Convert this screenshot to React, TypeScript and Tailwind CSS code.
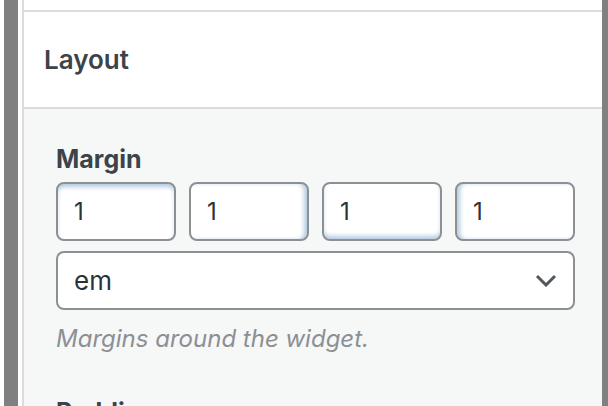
import React from "react";

const font = { fontFamily: "Inter, 'Noto Sans', sans-serif" };

export default function App() {
  const shadows = [
    "shadow-[inset_0_4px_4px_-1px_rgba(120,160,200,0.55)]",
    "shadow-[inset_-4px_0_4px_-1px_rgba(120,160,200,0.55)]",
    "shadow-[inset_0_-4px_4px_-1px_rgba(120,160,200,0.55)]",
    "shadow-[inset_4px_0_4px_-1px_rgba(120,160,200,0.55)]",
  ];
  return (
    <div className="w-[608px] h-[406px] overflow-hidden bg-white flex" style={font}>
      <div className="w-[4px] shrink-0 bg-white" />
      <div className="w-[14px] shrink-0 bg-[#808080]" />
      <div className="w-[4px] shrink-0 bg-white" />
      <div className="w-[2px] shrink-0 bg-[#dcdcde]" />
      <div className="flex-1 min-w-0 flex flex-col overflow-hidden">
        <div className="h-[10px] shrink-0 bg-white" />
        <div className="h-[2px] shrink-0 bg-[#dcdcde]" />
        <div className="h-[95px] shrink-0 bg-white flex items-center pl-[20px]">
          <span className="text-[26px] leading-[32px] font-semibold text-[#3c434a]">Layout</span>
        </div>
        <div className="h-[2px] shrink-0 bg-[#dcdcde]" />
        <div className="flex-1 shrink-0 bg-[#f6f7f7] pl-[32px] pr-[27px] pt-[34px]">
          <div className="text-[25px] leading-[32px] font-bold text-[#3c434a] mb-[7px]">Margin</div>
          <div className="flex gap-[13px]">
            {shadows.map((s, i) => (
              <div
                key={i}
                className={`flex-1 h-[59px] rounded-[8px] border-2 border-[#8c8f94] bg-white flex items-center pl-[16px] text-[24px] text-[#2c3338] ${s}`}
              >
                1
              </div>
            ))}
          </div>
          <div className="mt-[10px] h-[59px] rounded-[8px] border-2 border-[#8c8f94] bg-white flex items-center justify-between pl-[16px] pr-[16px] text-[26px] text-[#2c3338]">
            <span>em</span>
            <svg width="22" height="13" viewBox="0 0 22 13" fill="none">
              <polyline points="2,2 11,11 20,2" stroke="#50575e" strokeWidth="3" />
            </svg>
          </div>
          <div className="mt-[13px] text-[24px] leading-[32px] italic text-[#8c8f94]">Margins around the widget.</div>
          <div className="mt-[41px] text-[25px] leading-[32px] font-bold text-[#3c434a]">Padding</div>
        </div>
      </div>
      <div className="w-[6px] shrink-0 bg-[#808080]" />
    </div>
  );
}
